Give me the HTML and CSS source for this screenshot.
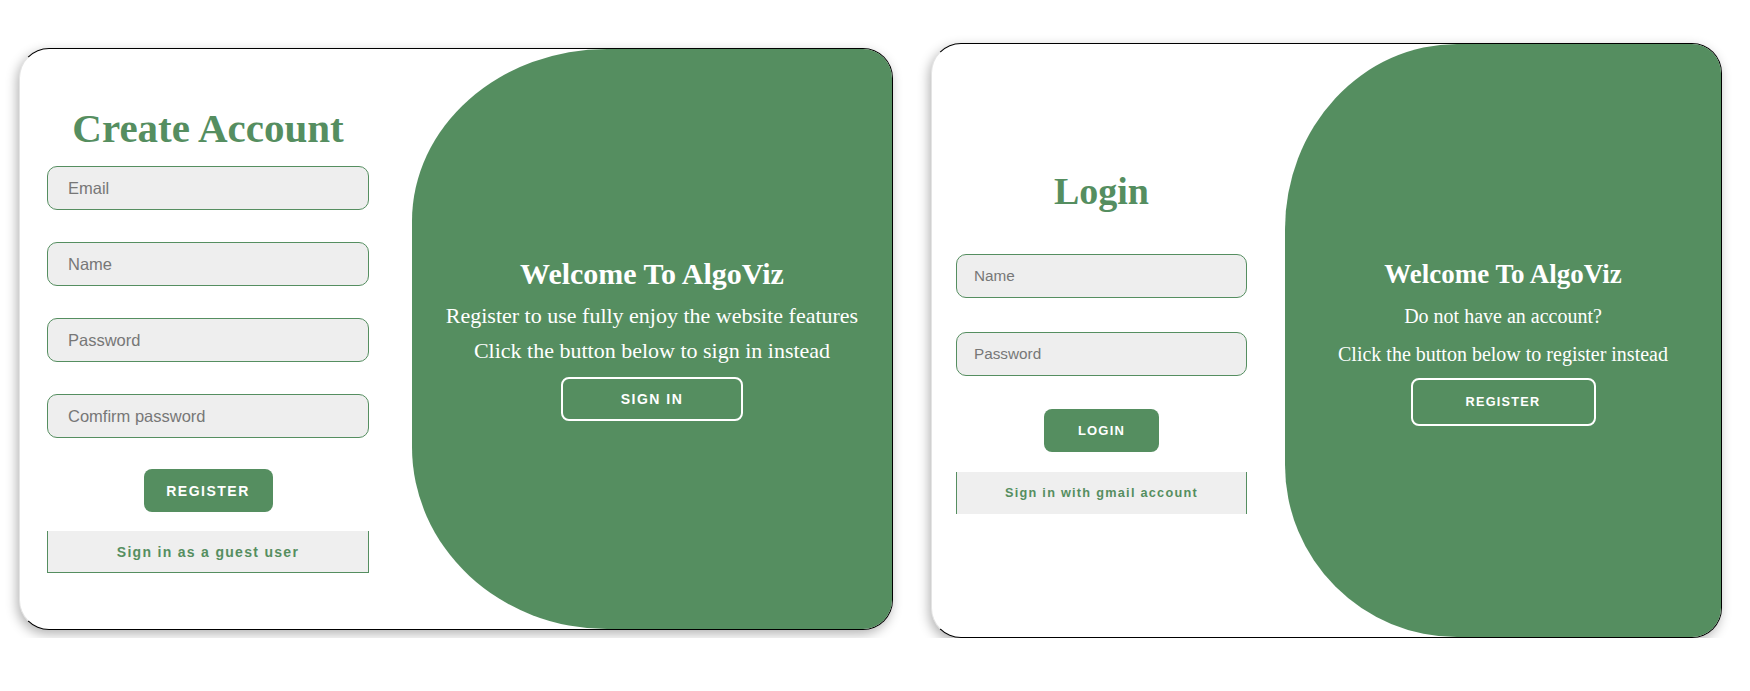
FILE: index.html
```html
<!DOCTYPE html>
<html lang="en">
<head>
<meta charset="utf-8">
<title>AlgoViz – Register / Login</title>
<link rel="stylesheet" href="styles.css">
</head>
<body>
<div class="page">
  <section class="card card-register">
    <form class="form">
      <h1 class="title">Create Account</h1>
      <input class="field" type="email" placeholder="Email">
      <input class="field" type="text" placeholder="Name">
      <input class="field" type="password" placeholder="Password">
      <input class="field" type="password" placeholder="Comfirm password">
      <button class="btn-solid" type="button">Register</button>
      <div class="alt-link">Sign in as a guest user</div>
    </form>
    <div class="panel">
      <h2 class="panel-title">Welcome To AlgoViz</h2>
      <p class="panel-text first">Register to use fully enjoy the website features</p>
      <p class="panel-text">Click the button below to sign in instead</p>
      <button class="btn-ghost" type="button">Sign in</button>
    </div>
  </section>

  <section class="card card-login">
    <form class="form">
      <h1 class="title">Login</h1>
      <input class="field" type="text" placeholder="Name">
      <input class="field" type="password" placeholder="Password">
      <button class="btn-solid" type="button">Login</button>
      <div class="alt-link">Sign in with gmail account</div>
    </form>
    <div class="panel">
      <h2 class="panel-title">Welcome To AlgoViz</h2>
      <p class="panel-text first">Do not have an account?</p>
      <p class="panel-text">Click the button below to register instead</p>
      <button class="btn-ghost" type="button">Register</button>
    </div>
  </section>
</div>
</body>
</html>
```

FILE: styles.css
```css
* { box-sizing: border-box; }

body {
  margin: 0;
  background: #ffffff;
  font-family: "Liberation Sans", Arial, sans-serif;
}

.page {
  display: flex;
  align-items: flex-start;
  gap: 38px;
  padding-left: 19px;
}

.card {
  display: flex;
  background: #ffffff;
  border: 1px solid #000000;
  border-left-color: #e4e4e4;
  border-radius: 30px;
  overflow: hidden;
  box-shadow: -2px 4px 12px rgba(0, 0, 0, 0.3);
}

.form {
  display: flex;
  flex-direction: column;
  align-items: center;
  margin: 0;
}

.title {
  margin: 0;
  font-family: "Liberation Serif", "Times New Roman", serif;
  font-weight: bold;
  color: #558e60;
  white-space: nowrap;
}

.field {
  display: block;
  width: 100%;
  margin: 0;
  border: 1px solid #558e60;
  border-radius: 10px;
  background: #eeeeee;
  font-family: "Liberation Sans", Arial, sans-serif;
  color: #333;
  outline: none;
}
.field::placeholder { color: #777777; }

.btn-solid {
  display: flex;
  align-items: center;
  justify-content: center;
  padding: 0;
  border: none;
  border-radius: 8px;
  background: #558e60;
  color: #ffffff;
  font-family: "Liberation Sans", Arial, sans-serif;
  font-weight: bold;
  text-transform: uppercase;
}

.alt-link {
  display: flex;
  align-items: center;
  justify-content: center;
  width: 100%;
  background: #efefef;
  border-left: 1px solid #558e60;
  border-right: 1px solid #558e60;
  color: #558e60;
  font-weight: bold;
}

.panel {
  display: flex;
  flex-direction: column;
  align-items: center;
  background: #558e60;
  color: #ffffff;
  font-family: "Liberation Serif", "Times New Roman", serif;
}

.panel-title {
  margin: 0;
  font-weight: bold;
  white-space: nowrap;
}

.panel-text {
  margin: 0;
  white-space: nowrap;
}

.btn-ghost {
  display: flex;
  align-items: center;
  justify-content: center;
  padding: 0;
  background: transparent;
  border: 2px solid #ffffff;
  border-radius: 8px;
  color: #ffffff;
  font-family: "Liberation Sans", Arial, sans-serif;
  font-weight: bold;
  text-transform: uppercase;
}

/* ---------- Register card ---------- */
.card-register {
  width: 874px;
  height: 582px;
  margin-top: 48px;
}
.card-register .form {
  width: 392px;
  flex: none;
  padding: 56px 43px 0 27px;
}
.card-register .title {
  font-size: 41px;
  line-height: 46px;
  margin-bottom: 15px;
}
.card-register .field {
  height: 44px;
  margin-bottom: 32px;
  padding: 0 0 0 20px;
  font-size: 16.5px;
}
.card-register .field:last-of-type { margin-bottom: 31px; }
.card-register .btn-solid {
  width: 129px;
  height: 43px;
  font-size: 14px;
  letter-spacing: 1.5px;
  margin-bottom: 19px;
}
.card-register .alt-link {
  height: 42px;
  border-bottom: 1px solid #558e60;
  font-size: 14px;
  letter-spacing: 1.3px;
}
.card-register .panel {
  flex: 1;
  border-radius: 195px 0 0 195px / 172px 0 0 182px;
  padding-top: 208px;
}
.card-register .panel-title {
  font-size: 30px;
  line-height: 34px;
}
.card-register .panel-text {
  font-size: 22px;
  line-height: 35px;
}
.card-register .panel-text.first { margin-top: 7px; }
.card-register .btn-ghost {
  width: 182px;
  height: 44px;
  margin-top: 9px;
  font-size: 14px;
  letter-spacing: 1.5px;
}

/* ---------- Login card ---------- */
.card-login {
  width: 791px;
  height: 595px;
  margin-top: 43px;
}
.card-login .form {
  width: 353px;
  flex: none;
  padding: 125px 38px 0 24px;
}
.card-login .title {
  font-size: 38px;
  line-height: 44px;
  margin-bottom: 41px;
}
.card-login .field {
  height: 44px;
  margin-bottom: 34px;
  padding: 0 0 0 17px;
  font-size: 15.3px;
}
.card-login .field:last-of-type { margin-bottom: 33px; }
.card-login .btn-solid {
  width: 115px;
  height: 43px;
  font-size: 13px;
  letter-spacing: 1.2px;
  margin-bottom: 20px;
}
.card-login .alt-link {
  height: 42px;
  font-size: 12.7px;
  letter-spacing: 1.27px;
}
.card-login .panel {
  flex: 1;
  border-radius: 172px 0 0 172px / 185px 0 0 172px;
  padding-top: 215px;
}
.card-login .panel-title {
  font-size: 27px;
  line-height: 31px;
}
.card-login .panel-text {
  font-size: 20px;
  line-height: 38px;
}
.card-login .panel-text.first { margin-top: 7px; }
.card-login .btn-ghost {
  width: 185px;
  height: 48px;
  margin-top: 5px;
  font-size: 12.7px;
  letter-spacing: 1.27px;
}
```
